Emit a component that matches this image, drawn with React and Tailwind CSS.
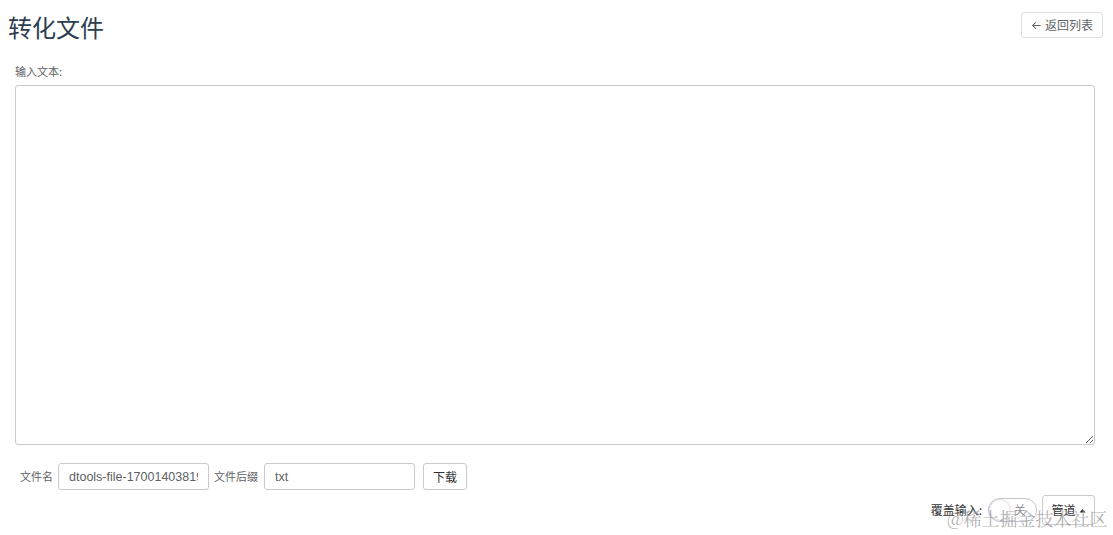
import React from "react";

export default function App() {
  const font = { fontFamily: '"Noto Sans CJK SC", "Liberation Sans", sans-serif' };
  const inputFont = { fontFamily: '"Liberation Sans", "Noto Sans CJK SC", sans-serif' };
  return (
    <div className="w-[1113px] h-[535px] bg-white relative overflow-hidden text-[#606266]" style={font}>
      <div className="flex items-start justify-between pl-[8px] pr-[10px] pt-[10px]">
        <h1 className="text-[24px] leading-[34px] text-[#2c3e50] font-normal">转化文件</h1>
        <button className="mt-[2px] h-[26px] px-[9px] flex items-center gap-[3px] border border-[#dcdfe6] rounded-[3px] text-[12px] text-[#606266] bg-white">
          <svg width="11" height="11" viewBox="0 0 12 12" fill="none" stroke="#606266" strokeWidth="1.1">
            <path d="M10.5 6H1.8M5.2 2.5L1.8 6l3.4 3.5" />
          </svg>
          返回列表
        </button>
      </div>
      <div className="px-[15px] pr-[18px] mt-[20px]">
        <div className="text-[11px] leading-[14px] text-[#606266]">输入文本:</div>
        <textarea
          className="mt-[7px] block w-full h-[360px] border border-[#c8cacf] rounded-[3px] resize-y outline-none"
          defaultValue=""
        />
      </div>
      <div className="flex items-center mt-[18px] pl-[20px] text-[11px]">
        <span className="mr-[5px]">文件名</span>
        <input
          className="w-[151px] h-[27px] border border-[#c8cacf] rounded-[3px] px-[10px] text-[12.5px] text-[#606266] outline-none"
          style={inputFont}
          defaultValue="dtools-file-1700140381925"
        />
        <span className="ml-[5px] mr-[6px]">文件后缀</span>
        <input
          className="w-[151px] h-[27px] border border-[#c8cacf] rounded-[3px] px-[10px] text-[12.5px] text-[#606266] outline-none"
          style={inputFont}
          defaultValue="txt"
        />
        <button className="ml-[8px] h-[27px] w-[44px] border border-[#c8cacf] rounded-[3px] text-[12px] text-[#303133] bg-white">下载</button>
      </div>
      <div className="flex items-center justify-end pr-[18px] mt-[5px] text-[12px]">
        <span className="mr-[6px] text-[#303133]">覆盖输入:</span>
        <div className="w-[49px] h-[24px] rounded-full border border-[#c0c4cc] bg-white flex items-center justify-between pl-[1px] pr-[10px]">
          <div className="w-[20px] h-[20px] rounded-full bg-white shadow-[0_0_2px_rgba(0,0,0,0.35)]" />
          <span className="text-[12px] text-[#909399]">关</span>
        </div>
        <button className="ml-[5px] h-[30px] w-[53px] border border-[#c8cacf] rounded-[3px] text-[12px] text-[#303133] bg-white flex items-center justify-center gap-[3px]">
          管道
          <svg width="7" height="5" viewBox="0 0 7 5"><path d="M0.5 4.5L3.5 1l3 3.5z" fill="#303133" /></svg>
        </button>
      </div>
      <div
        className="absolute left-[947px] top-[506px] text-[18px] leading-[24px] text-[rgba(150,150,150,0.75)] pointer-events-none"
        style={{ fontFamily: '"Noto Serif CJK SC", "Liberation Serif", "Noto Sans CJK SC", serif' }}
      >
        @稀土掘金技术社区
      </div>
    </div>
  );
}
